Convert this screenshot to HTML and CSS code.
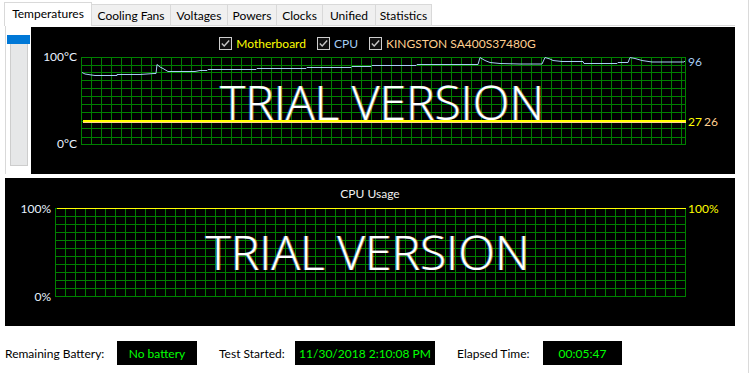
FILE: index.html
```html
<!DOCTYPE html>
<html>
<head>
<meta charset="utf-8">
<link rel="stylesheet" href="styles.css">
</head>
<body>
<div class="window">
  <div class="tabs">
    <div class="tab tab--active">Temperatures</div>
    <div class="tab tab--fans">Cooling Fans</div>
    <div class="tab tab--volt">Voltages</div>
    <div class="tab tab--pow">Powers</div>
    <div class="tab tab--clk">Clocks</div>
    <div class="tab tab--uni">Unified</div>
    <div class="tab tab--stat">Statistics</div>
  </div>

  <div class="panel">
    <div class="side">
      <div class="side-thumb"></div>
      <div class="side-track"></div>
    </div>

    <div class="chart chart--temp">
      <div class="legend">
        <div class="legend-item">
          <svg class="cb" width="13" height="13" viewBox="0 0 13 13"><rect x="0.5" y="0.5" width="12" height="12" fill="#111" stroke="#cfcfcf"/><polyline points="2.8,6.6 5.2,9 10.2,3.6" fill="none" stroke="#c8c8c8" stroke-width="1.4"/></svg>
          <span class="lg lg--mb">Motherboard</span>
        </div>
        <div class="legend-item">
          <svg class="cb" width="13" height="13" viewBox="0 0 13 13"><rect x="0.5" y="0.5" width="12" height="12" fill="#111" stroke="#cfcfcf"/><polyline points="2.8,6.6 5.2,9 10.2,3.6" fill="none" stroke="#c8c8c8" stroke-width="1.4"/></svg>
          <span class="lg lg--cpu">CPU</span>
        </div>
        <div class="legend-item">
          <svg class="cb" width="13" height="13" viewBox="0 0 13 13"><rect x="0.5" y="0.5" width="12" height="12" fill="#111" stroke="#cfcfcf"/><polyline points="2.8,6.6 5.2,9 10.2,3.6" fill="none" stroke="#c8c8c8" stroke-width="1.4"/></svg>
          <span class="lg lg--ssd">KINGSTON SA400S37480G</span>
        </div>
      </div>

      <div class="plot-row plot-row--temp">
        <div class="axis axis--left">
          <span class="tick" style="top:0px">100°C</span>
          <span class="tick" style="top:87px">0°C</span>
        </div>
        <div class="plot plot--temp">
          <svg width="605" height="88" viewBox="0 0 605 88" shape-rendering="crispEdges">
            <defs>
              <pattern id="tv" width="10" height="88" patternUnits="userSpaceOnUse"><rect width="1" height="88" fill="#008000"/></pattern>
            </defs>
            <rect x="0" y="0" width="601" height="88" fill="url(#tv)"/>
            <rect x="604" y="0" width="1" height="88" fill="#008000"/>
            <g fill="#008000">
              <rect x="0" y="0" width="605" height="1"/>
              <rect x="0" y="8" width="605" height="1"/>
              <rect x="0" y="15" width="605" height="1"/>
              <rect x="0" y="23" width="605" height="1"/>
              <rect x="0" y="31" width="605" height="1"/>
              <rect x="0" y="39" width="605" height="1"/>
              <rect x="0" y="47" width="605" height="1"/>
              <rect x="0" y="55" width="605" height="1"/>
              <rect x="0" y="64" width="605" height="1"/>
              <rect x="0" y="71" width="605" height="1"/>
              <rect x="0" y="80" width="605" height="1"/>
              <rect x="0" y="87" width="605" height="1"/>
            </g>
            <rect x="2" y="63" width="603" height="2" fill="#ffff00"/>
            <rect x="2" y="65" width="603" height="1" fill="#ffcf8f"/>
            <polyline shape-rendering="auto" fill="none" stroke="#a6cdf2" stroke-width="1"
              points="1,15.5 4,17 14,18.5 36,18.5 36,17.5 59,17.5 73,16.5 75,16.5 76,7.5 79,10 82,11.5 87,14.5 114,14.5 119,13.5 126,13.5 127,12.5 175,12.5 176,11.5 225,11.5 226,10.5 270,10.5 271,9.5 290,9.5 291,8.5 335,8.5 336,7.5 397,7.5 399,0.5 404,3.5 409,5.5 419,6.5 439,7 461,7 464,0.5 469,2 472,3.5 481,4.5 502,4.5 503,6.5 536,6.5 537,5.5 547,5.5 549,0.5 554,1.5 561,3.5 571,5 603,5 604,4"/>
          </svg>
          <div class="trial trial--temp">TRIAL VERSION</div>
        </div>
        <div class="axis axis--right">
          <span class="val val--cpu" style="top:5px">96</span>
          <span class="val val--mb" style="top:65px">27</span>
          <span class="val val--ssd" style="top:65px">26</span>
        </div>
      </div>
    </div>
  </div>

  <div class="chart chart--cpu">
    <div class="chart-title">CPU Usage</div>
    <div class="plot-row plot-row--cpu">
      <div class="axis axis--left">
        <span class="tick" style="top:1px">100%</span>
        <span class="tick" style="top:89px">0%</span>
      </div>
      <div class="plot plot--cpu">
        <svg width="631" height="89" viewBox="0 0 631 89" shape-rendering="crispEdges">
          <defs>
            <pattern id="cv" width="10" height="89" patternUnits="userSpaceOnUse"><rect width="1" height="89" fill="#008000"/></pattern>
            <pattern id="ch" width="631" height="8" patternUnits="userSpaceOnUse"><rect width="631" height="1" fill="#008000"/></pattern>
          </defs>
          <rect x="0" y="0" width="631" height="89" fill="url(#cv)"/>
          <rect x="0" y="0" width="631" height="89" fill="url(#ch)"/>
          <rect x="2" y="0" width="629" height="1" fill="#ffff00"/>
        </svg>
        <div class="trial trial--cpu">TRIAL VERSION</div>
      </div>
      <div class="axis axis--right">
        <span class="val val--mb" style="top:1px">100%</span>
      </div>
    </div>
  </div>

  <div class="status">
    <span class="st-label st-label--battery">Remaining Battery:</span>
    <span class="st-box st-box--battery">No battery</span>
    <span class="st-label st-label--started">Test Started:</span>
    <span class="st-box st-box--started">11/30/2018 2:10:08 PM</span>
    <span class="st-label st-label--elapsed">Elapsed Time:</span>
    <span class="st-box st-box--elapsed">00:05:47</span>
  </div>
</div>
</body>
</html>
```

FILE: styles.css
```css
* { box-sizing: border-box; }
html, body { margin: 0; padding: 0; background: #fff; }
body {
  font-family: Lato, "Open Sans", "DejaVu Sans", sans-serif;
  font-size: 12px;
  color: #000;
}
.window {
  width: 749px;
  height: 373px;
  border-right: 1px solid #dadada;
  overflow: hidden;
}

/* tabs */
.tabs {
  display: flex;
  align-items: flex-end;
  height: 25px;
  padding-left: 4px;
}
.tab {
  height: 21px;
  display: flex;
  align-items: center;
  justify-content: center;
  padding-top: 1px;
  background: #f0f0f0;
  border-top: 1px solid #d9d9d9;
  border-right: 1px solid #d9d9d9;
  white-space: nowrap;
}
.tab--active {
  position: relative;
  z-index: 1;
  height: 24px;
  margin-bottom: -1px;
  padding-top: 0;
  padding-bottom: 2px;
  background: #fff;
  border-left: 1px solid #d9d9d9;
  width: 88px;
}
.tab--fans { width: 79px; }
.tab--volt { width: 57px; }
.tab--pow { width: 49px; }
.tab--clk { width: 46px; }
.tab--uni { width: 53px; }
.tab--stat { width: 56px; }

/* top panel */
.panel {
  display: flex;
  margin-left: 5px;
  width: 730px;
  height: 149px;
  border-top: 1px solid #d9d9d9;
  border-left: 1px solid #d9d9d9;
}
.side {
  width: 25px;
  display: flex;
  flex-direction: column;
}
.side-thumb {
  margin: 9px 0 0 1px;
  width: 23px;
  height: 9px;
  background: #0078d7;
}
.side-track {
  margin-left: 4px;
  width: 18px;
  height: 122px;
  background: #e6e7e8;
  border: 1px solid #cdcdcd;
  border-top: none;
}

/* charts */
.chart {
  background: #000;
  color: #fff;
  display: flex;
  flex-direction: column;
}
.chart--temp {
  width: 704px;
  height: 147px;
  margin-top: 1px;
  padding-top: 10px;
}
.chart--cpu {
  margin: 4px 0 0 5px;
  width: 730px;
  height: 148px;
  padding-top: 8px;
}
.legend {
  display: flex;
  justify-content: center;
  gap: 11px;
  height: 13px;
  padding-right: 11px;
}
.legend-item {
  display: flex;
  align-items: center;
  gap: 4px;
}
.cb { display: block; flex: none; }
.lg { line-height: 13px; }
.lg--mb { color: #ffff00; }
.lg--cpu { color: #a6cdf2; }
.lg--ssd { color: #ffcf8f; }

.chart-title {
  text-align: center;
  line-height: 15px;
  height: 15px;
  color: #f0f0f0;
}

.plot-row { display: flex; }
.plot-row--temp { margin-top: 7px; height: 88px; }
.plot-row--cpu { margin-top: 7px; height: 89px; }

.axis {
  position: relative;
  width: 50px;
  flex: none;
}
.axis--right { flex: 1; }
.tick {
  position: absolute;
  right: 4px;
  transform: translateY(-50%);
  color: #e8f2ff;
  line-height: 14px;
  white-space: nowrap;
}
.val {
  position: absolute;
  left: 2px;
  transform: translateY(-50%);
  line-height: 14px;
  white-space: nowrap;
}
.val--cpu { color: #a6cdf2; }
.val--mb { color: #ffff00; }
.val--ssd { color: #ffcf8f; left: 18px; }

.plot {
  position: relative;
  flex: none;
}
.plot svg { display: block; }

.trial {
  position: absolute;
  left: 0;
  right: 0;
  text-align: center;
  font-family: "Open Sans", Lato, sans-serif;
  font-weight: 300;
  font-size: 48px;
  line-height: 48px;
  color: #fff;
  white-space: nowrap;
  text-shadow: -1px 0 0 rgba(70,150,255,0.55), 1px 0 0 rgba(255,190,110,0.55);
}
.trial--temp { top: 21px; margin-left: -3px; }
.trial--cpu { top: 20px; margin-left: -6px; }

/* status bar */
.status {
  display: flex;
  align-items: center;
  margin-top: 15px;
  padding-left: 5px;
  height: 24px;
}
.st-label { white-space: nowrap; }
.st-label--battery { width: 112px; }
.st-label--started { width: 76px; margin-left: 22px; }
.st-label--elapsed { width: 86px; margin-left: 22px; }
.st-box {
  height: 24px;
  display: flex;
  align-items: center;
  justify-content: center;
  background: #000;
  color: #00ff00;
  white-space: nowrap;
}
.st-box--battery { width: 80px; }
.st-box--started { width: 140px; }
.st-box--elapsed { width: 79px; }
```
